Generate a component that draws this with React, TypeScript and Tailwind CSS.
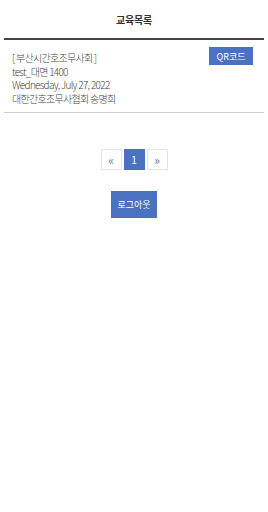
import React from 'react';

const items = [
  {
    org: '[ 부산시간호조무사회 ]',
    title: 'test_대면 1400',
    date: 'Wednesday, July 27, 2022',
    host: '대한간호조무사협회 송명희',
  },
];

const App: React.FC = () => {
  return (
    <div className="w-[268px] min-h-[512px] bg-white text-[#333] font-['Noto_Sans_CJK_KR','Noto_Sans',sans-serif]">
      {/* Header */}
      <div className="h-[38px] flex items-center justify-center">
        <h1 className="text-[10px] font-bold tracking-tight">교육목록</h1>
      </div>

      {/* List */}
      <div className="mx-[4px] border-t-2 border-[#444]">
        {items.map(item => (
          <div key={item.title} className="flex items-start justify-between pl-[8px] pr-[9px] pt-[7px] pb-[7px] border-b border-[#ccc]">
            <div className="pt-[4px] text-[10px] leading-[13.5px] font-light tracking-[-0.7px] text-[#444]">
              <p>{item.org}</p>
              <p>{item.title}</p>
              <p>{item.date}</p>
              <p>{item.host}</p>
            </div>
            <button className="w-[44px] h-[18px] mr-[2px] bg-[#4a72c0] text-white text-[9px] leading-none">QR코드</button>
          </div>
        ))}
      </div>

      {/* Pagination */}
      <div className="flex justify-center gap-[2px] mt-[36px]">
        <span className="w-[21px] h-[21px] flex items-center justify-center border border-[#e4e4e4] text-[#777] text-[12px]">«</span>
        <span className="w-[21px] h-[21px] flex items-center justify-center bg-[#4a72c0] text-white text-[10px]">1</span>
        <span className="w-[21px] h-[21px] flex items-center justify-center border border-[#e4e4e4] text-[#777] text-[12px]">»</span>
      </div>

      {/* Logout */}
      <div className="flex justify-center mt-[21px]">
        <button className="w-[46px] h-[27px] bg-[#4a72c0] text-white text-[9px]">로그아웃</button>
      </div>
    </div>
  );
};

export default App;
